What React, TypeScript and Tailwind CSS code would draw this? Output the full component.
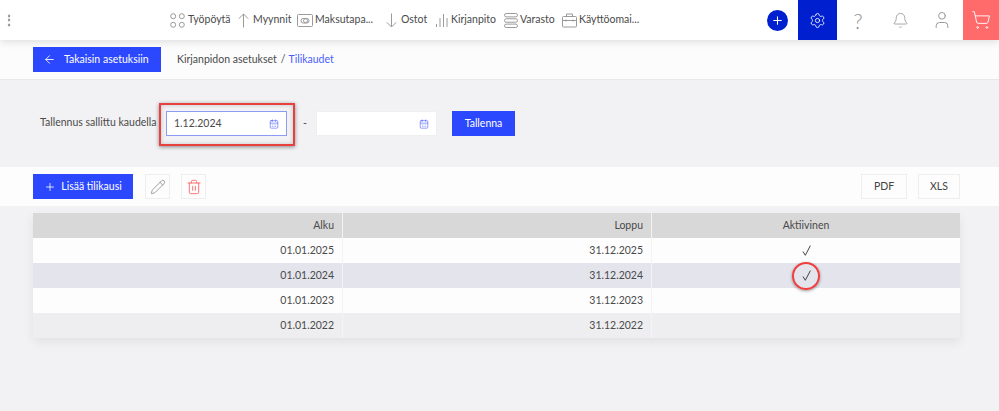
import { ArrowLeft, Bell, CalendarDays, Pencil, Plus, Settings, ShoppingCart, Trash2, User } from "lucide-react";

const Dashboard = () => (
  <svg width="15" height="15" viewBox="0 0 15 15" fill="none" stroke="#9a9a9a" strokeWidth="1">
    <circle cx="3.2" cy="3.2" r="2.5" />
    <circle cx="11.8" cy="3.2" r="2.5" />
    <circle cx="3.2" cy="11.8" r="2.5" />
    <circle cx="11.8" cy="11.8" r="2.5" />
  </svg>
);

const UpArrow = () => (
  <svg width="11" height="15" viewBox="0 0 11 15" fill="none" stroke="#9a9a9a" strokeWidth="1">
    <path d="M5.5 14.5V1M0.8 5.7 5.5 1l4.7 4.7" />
  </svg>
);

const DownArrow = () => (
  <svg width="11" height="15" viewBox="0 0 11 15" fill="none" stroke="#9a9a9a" strokeWidth="1">
    <path d="M5.5 0.5V14M0.8 9.3 5.5 14l4.7-4.7" />
  </svg>
);

const PayCard = () => (
  <svg width="16" height="13" viewBox="0 0 16 13" fill="none" stroke="#9a9a9a" strokeWidth="1">
    <rect x="0.5" y="0.5" width="15" height="12" rx="1" />
    <rect x="4" y="4.5" width="8" height="4.5" rx="2.2" />
    <circle cx="8.5" cy="6.7" r="2" />
  </svg>
);

const Bars = () => (
  <svg width="12" height="15" viewBox="0 0 12 15" fill="none" stroke="#9a9a9a" strokeWidth="1">
    <path d="M0.5 11v3M4 5v9M7.5 1v13M11 5v9" />
  </svg>
);

const Stack = () => (
  <svg width="14" height="15" viewBox="0 0 14 15" fill="none" stroke="#9a9a9a" strokeWidth="1">
    <rect x="0.5" y="0.5" width="13" height="3.4" rx="1.7" />
    <rect x="0.5" y="5.8" width="13" height="3.4" rx="1.7" />
    <rect x="0.5" y="11.1" width="13" height="3.4" rx="1.7" />
  </svg>
);

const Briefcase = () => (
  <svg width="15" height="15" viewBox="0 0 15 15" fill="none" stroke="#9a9a9a" strokeWidth="1">
    <rect x="0.5" y="3.5" width="14" height="10.5" rx="1" />
    <path d="M4.5 3.5V1h6v2.5M0.5 7.5h14M4 6.5v2M11 6.5v2" />
  </svg>
);

const CheckMark = () => (
  <svg width="9" height="11" viewBox="0 0 9 11" fill="none" stroke="#444" strokeWidth="1">
    <path d="M1 6.5 3.3 10.3 8.4 0.6" />
  </svg>
);

const navItems = [
  { label: "Työpöytä", icon: <Dashboard />, width: "w-[68px]", gap: "gap-[3px]" },
  { label: "Myynnit", icon: <UpArrow />, width: "w-[59px]", gap: "gap-[4px]" },
  { label: "Maksutapa...", icon: <PayCard />, width: "w-[89px]", gap: "gap-[2px]" },
  { label: "Ostot", icon: <DownArrow />, width: "w-[50px]", gap: "gap-[4px]" },
  { label: "Kirjanpito", icon: <Bars />, width: "w-[68px]", gap: "gap-[3px]" },
  { label: "Varasto", icon: <Stack />, width: "w-[58px]", gap: "gap-[2px]" },
  { label: "Käyttöomai...", icon: <Briefcase />, width: "w-[80px]", gap: "gap-[2px]" },
];

const rows = [
  { start: "01.01.2025", end: "31.12.2025", active: true, marked: false, bg: "bg-[#fdfdfd]" },
  { start: "01.01.2024", end: "31.12.2024", active: true, marked: true, bg: "bg-[#e3e4ec]" },
  { start: "01.01.2023", end: "31.12.2023", active: false, marked: false, bg: "bg-[#fdfdfd]" },
  { start: "01.01.2022", end: "31.12.2022", active: false, marked: false, bg: "bg-[#eeeef0]" },
];

export default function App() {
  return (
    <div className="h-[411px] w-[999px] overflow-hidden bg-[#f2f2f4] font-['Lato','Liberation_Sans',sans-serif] text-[10.5px] text-[#4a4a4a]">
      <header className="relative z-10 flex h-10 items-center bg-white shadow-[0_2px_8px_rgba(0,0,0,0.12)]">
        <span className="ml-[3px] w-[167px] text-[12px] font-bold leading-none text-[#888]">⋮</span>
        <nav className="flex items-center">
          {navItems.map((item) => (
            <div key={item.label} className={`flex items-center whitespace-nowrap ${item.width} ${item.gap}`}>
              {item.icon}
              <span>{item.label}</span>
            </div>
          ))}
        </nav>
        <div className="ml-auto flex h-full items-center">
          <div className="mr-[10px] flex h-[21px] w-[21px] items-center justify-center rounded-full bg-[#0020d0]">
            <Plus size={13} color="white" strokeWidth={2} />
          </div>
          <div className="flex h-full w-[39px] items-center justify-center bg-[#0020d0]">
            <Settings size={17} color="white" strokeWidth={1.2} />
          </div>
          <div className="flex h-full w-[42px] items-center justify-center">
            <span className="text-[21px] font-light leading-none text-[#8f8f8f]">?</span>
          </div>
          <div className="flex h-full w-[42px] items-center justify-center">
            <Bell size={17} color="#8f8f8f" strokeWidth={1.1} />
          </div>
          <div className="flex h-full w-[42px] items-center justify-center">
            <User size={20} color="#8f8f8f" strokeWidth={1.1} />
          </div>
          <div className="flex h-full w-[36px] items-center justify-center bg-[#ff6b6b]">
            <ShoppingCart size={20} color="white" strokeWidth={1.1} />
          </div>
        </div>
      </header>

      <div className="flex h-[40px] items-center border-b border-[#e8e8e8] bg-[#fcfcfc] pl-[33px]">
        <button className="flex h-[25px] w-[128px] items-center bg-[#2c48ff] pl-[10px] text-white">
          <ArrowLeft size={13} strokeWidth={1.6} />
          <span className="ml-[8px]">Takaisin asetuksiin</span>
        </button>
        <span className="ml-[16px]">Kirjanpidon asetukset</span>
        <span className="ml-[4px]">/</span>
        <span className="ml-[3px] text-[#4a5cff]">Tilikaudet</span>
      </div>

      <div className="flex h-[87px] items-start pl-[40px] pt-[31px]">
        <span className="mt-[4px] w-[126px] whitespace-nowrap">Tallennus sallittu kaudella</span>
        <div className="relative">
          <DateInput value="1.12.2024" focused />
          <div className="absolute -bottom-[10px] -left-[7px] -right-[8px] -top-[8px] border-2 border-[#e8403f] shadow-[0_1px_4px_rgba(0,0,0,0.45),inset_0_0_4px_rgba(0,0,0,0.2)]" />
        </div>
        <span className="mt-[5px] w-[29px] pl-[16px]">-</span>
        <DateInput value="" />
        <button className="ml-[15px] h-[25px] w-[63px] bg-[#2c48ff] text-white">Tallenna</button>
      </div>

      <div className="flex h-[39px] items-center bg-[#fdfdfd] pl-[33px] pr-[39px]">
        <button className="flex h-[25px] w-[100px] items-center justify-center gap-[5px] bg-[#2c48ff] text-white">
          <Plus size={12} strokeWidth={1.6} />
          Lisää tilikausi
        </button>
        <button className="ml-[12px] flex h-[25px] w-[25px] items-center justify-center border border-[#eeeeee]">
          <Pencil size={16} color="#808080" strokeWidth={1.1} />
        </button>
        <button className="ml-[11px] flex h-[25px] w-[25px] items-center justify-center border border-[#eeeeee]">
          <Trash2 size={16} color="#ff6b6b" strokeWidth={1.4} />
        </button>
        <button className="ml-auto h-[25px] w-[46px] border border-[#eeeeee] text-[#444]">PDF</button>
        <button className="ml-[11px] h-[25px] w-[42px] border border-[#eeeeee] text-[#444]">XLS</button>
      </div>

      <div className="ml-[33px] mt-[7px] w-[927px] shadow-[0_4px_10px_rgba(0,0,0,0.07)]">
        <div className="grid h-[25px] grid-cols-[310px_309px_308px] items-stretch bg-[#d8d8d8]">
          <div className="flex items-center justify-end border-r border-[#f2f2f2] pr-[8px]">Alku</div>
          <div className="flex items-center justify-end border-r border-[#f2f2f2] pr-[8px]">Loppu</div>
          <div className="flex items-center justify-center">Aktiivinen</div>
        </div>
        {rows.map((row) => (
          <div key={row.start} className={`grid h-[25px] grid-cols-[310px_309px_308px] items-stretch ${row.bg}`}>
            <div className="flex items-center justify-end border-r border-[#f4f4f4] pr-[8px]">{row.start}</div>
            <div className="flex items-center justify-end border-r border-[#f4f4f4] pr-[8px]">{row.end}</div>
            <div className="relative flex items-center justify-center">
              {row.active && <CheckMark />}
              {row.marked && (
                <div className="absolute left-1/2 top-1/2 h-[28px] w-[28px] -translate-x-1/2 -translate-y-1/2 rounded-full border-2 border-[#ef3e3e] shadow-[0_1px_3px_rgba(0,0,0,0.4)]" />
              )}
            </div>
          </div>
        ))}
      </div>
    </div>
  );
}

function DateInput({ value, focused }: { value: string; focused?: boolean }) {
  return (
    <div
      className={`flex h-[25px] w-[121px] items-center justify-between bg-white pl-[7px] pr-[7px] ${
        focused ? "border border-[#8c9cf5]" : "border border-[#efeff2]"
      }`}
    >
      <span>{value}</span>
      <CalendarDays size={10} color="#4a5cff" strokeWidth={1.4} />
    </div>
  );
}
